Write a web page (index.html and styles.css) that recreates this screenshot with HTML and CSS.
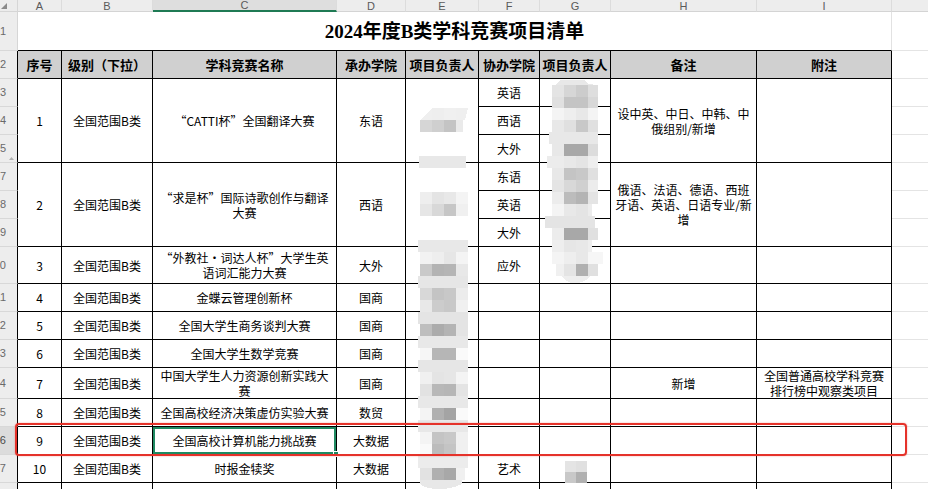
FILE: index.html
```html
<!DOCTYPE html>
<html lang="zh-CN">
<head>
<meta charset="utf-8">
<title>2024年度B类学科竞赛项目清单</title>
<link rel="stylesheet" href="styles.css">
</head>
<body>
<div class="wrap">
  <div class="sheet">
    <div class="corner"><svg width="6" height="6" viewBox="0 0 6 6"><polygon points="6,0 6,6 0,6" fill="#8a8a8a"/></svg></div>
    <div class="ch">A</div><div class="ch">B</div><div class="ch sel">C</div><div class="ch">D</div><div class="ch">E</div><div class="ch">F</div><div class="ch">G</div><div class="ch">H</div><div class="ch">I</div><div class="ch last"></div>

    <div class="rn top">1</div><div class="title">2024年度B类学科竞赛项目清单</div><div class="x"></div>

    <div class="rn">2</div><div class="th">序号</div><div class="th">级别（下拉）</div><div class="th">学科竞赛名称</div><div class="th">承办学院</div><div class="th">项目负责人</div><div class="th">协办学院</div><div class="th">项目负责人</div><div class="th">备注</div><div class="th">附注</div><div class="x"></div>

    <div class="rn">3</div><div class="c s3">1</div><div class="c s3">全国范围B类</div><div class="c s3">“CATTI杯”全国翻译大赛</div><div class="c s3">东语</div><div class="c s3"></div><div class="c">英语</div><div class="c"></div><div class="c s3">设中英、中日、中韩、中<br>俄组别/新增</div><div class="c s3"></div><div class="x"></div>
    <div class="rn">4</div><div class="c">西语</div><div class="c"></div><div class="x"></div>
    <div class="rn hid">5<svg class="hidemark" width="5" height="9" viewBox="0 0 5 9"><polygon points="2.5,0 5,3 0,3" fill="#b0b0b0"/><polygon points="0,6 5,6 2.5,9" fill="#b0b0b0"/></svg></div><div class="c">大外</div><div class="c"></div><div class="x"></div>

    <div class="rn">7</div><div class="c s3">2</div><div class="c s3">全国范围B类</div><div class="c s3">“求是杯”国际诗歌创作与翻译<br>大赛</div><div class="c s3">西语</div><div class="c s3"></div><div class="c">东语</div><div class="c"></div><div class="c s3">俄语、法语、德语、西班<br>牙语、英语、日语专业/新<br>增</div><div class="c s3"></div><div class="x"></div>
    <div class="rn">8</div><div class="c">英语</div><div class="c"></div><div class="x"></div>
    <div class="rn">9</div><div class="c">大外</div><div class="c"></div><div class="x"></div>

    <div class="rn">10</div><div class="c">3</div><div class="c">全国范围B类</div><div class="c">“外教社·词达人杯”大学生英<br>语词汇能力大赛</div><div class="c">大外</div><div class="c"></div><div class="c">应外</div><div class="c"></div><div class="c"></div><div class="c"></div><div class="x"></div>

    <div class="rn">11</div><div class="c">4</div><div class="c">全国范围B类</div><div class="c">金蝶云管理创新杯</div><div class="c">国商</div><div class="c"></div><div class="c"></div><div class="c"></div><div class="c"></div><div class="c"></div><div class="x"></div>

    <div class="rn">12</div><div class="c">5</div><div class="c">全国范围B类</div><div class="c">全国大学生商务谈判大赛</div><div class="c">国商</div><div class="c"></div><div class="c"></div><div class="c"></div><div class="c"></div><div class="c"></div><div class="x"></div>

    <div class="rn">13</div><div class="c">6</div><div class="c">全国范围B类</div><div class="c">全国大学生数学竞赛</div><div class="c">国商</div><div class="c"></div><div class="c"></div><div class="c"></div><div class="c"></div><div class="c"></div><div class="x"></div>

    <div class="rn">14</div><div class="c">7</div><div class="c">全国范围B类</div><div class="c">中国大学生人力资源创新实践大<br>赛</div><div class="c">国商</div><div class="c"></div><div class="c"></div><div class="c"></div><div class="c">新增</div><div class="c">全国普通高校学科竞赛<br>排行榜中观察类项目</div><div class="x"></div>

    <div class="rn">15</div><div class="c">8</div><div class="c">全国范围B类</div><div class="c">全国高校经济决策虚仿实验大赛</div><div class="c">数贸</div><div class="c"></div><div class="c"></div><div class="c"></div><div class="c"></div><div class="c"></div><div class="x"></div>

    <div class="rn cur">16</div><div class="c">9</div><div class="c">全国范围B类</div><div class="c active">全国高校计算机能力挑战赛<span class="handle"></span></div><div class="c">大数据</div><div class="c"></div><div class="c"></div><div class="c"></div><div class="c"></div><div class="c"></div><div class="x"></div>

    <div class="rn">17</div><div class="c">10</div><div class="c">全国范围B类</div><div class="c">时报金犊奖</div><div class="c">大数据</div><div class="c"></div><div class="c">艺术</div><div class="c"></div><div class="c"></div><div class="c"></div><div class="x"></div>

    <div class="rn">18</div><div class="c"></div><div class="c"></div><div class="c"></div><div class="c"></div><div class="c"></div><div class="c"></div><div class="c"></div><div class="c"></div><div class="c"></div><div class="x"></div>
  </div>

  <svg class="mosaic" width="928" height="489" viewBox="0 0 928 489" shape-rendering="crispEdges">
    <!-- E column -->
    <polygon points="420,120 432,108 468,108 465,120" fill="#efefef"/>
    <rect x="432" y="108" width="12" height="12" fill="#eeeeee"/><rect x="444" y="108" width="12" height="12" fill="#f0f0f0"/>
    <rect x="420" y="120" width="12" height="12" fill="#d6d6d6"/><rect x="432" y="120" width="12" height="12" fill="#cfcfcf"/><rect x="444" y="120" width="12" height="12" fill="#c4c4c4"/><rect x="456" y="120" width="7" height="12" fill="#eaeaea"/>
    <rect x="419" y="156" width="47" height="12" fill="#e8e8e8"/>
    <rect x="420" y="192" width="12" height="12" fill="#eeeeee"/><rect x="432" y="192" width="12" height="12" fill="#e4e4e4"/><rect x="444" y="192" width="12" height="12" fill="#e8e8e8"/><rect x="456" y="192" width="12" height="12" fill="#f4f4f4"/>
    <rect x="420" y="204" width="12" height="12" fill="#e6e6e6"/><rect x="432" y="204" width="12" height="12" fill="#d8d8d8"/><rect x="444" y="204" width="12" height="12" fill="#c6c6c6"/><rect x="456" y="204" width="12" height="12" fill="#f0f0f0"/>
    <rect x="418" y="240" width="50" height="12" fill="#e8e8e8"/>
    <rect x="420" y="252" width="12" height="12" fill="#f2f2f2"/><rect x="432" y="252" width="12" height="12" fill="#eeeeee"/><rect x="444" y="252" width="12" height="12" fill="#e6e6e6"/><rect x="456" y="252" width="12" height="12" fill="#f4f4f4"/>
    <rect x="420" y="264" width="12" height="12" fill="#c9c9c9"/><rect x="432" y="264" width="12" height="12" fill="#b3b3b3"/><rect x="444" y="264" width="12" height="12" fill="#b5b5b5"/><rect x="456" y="264" width="12" height="12" fill="#e8e8e8"/>
    <rect x="418" y="276" width="50" height="12" fill="#e6e6e6"/>
    <rect x="420" y="288" width="12" height="12" fill="#d8d8d8"/><rect x="432" y="288" width="12" height="12" fill="#c4c4c4"/><rect x="444" y="288" width="12" height="12" fill="#c8c8c8"/><rect x="456" y="288" width="12" height="12" fill="#ececec"/>
    <rect x="420" y="300" width="12" height="12" fill="#e8e8e8"/><rect x="432" y="300" width="12" height="12" fill="#cccccc"/><rect x="444" y="300" width="12" height="12" fill="#c8c8c8"/><rect x="456" y="300" width="12" height="12" fill="#f0f0f0"/>
    <rect x="418" y="312" width="50" height="12" fill="#e4e4e4"/>
    <rect x="420" y="324" width="12" height="12" fill="#bebebe"/><rect x="432" y="324" width="12" height="12" fill="#acacac"/><rect x="444" y="324" width="12" height="12" fill="#b4b4b4"/><rect x="456" y="324" width="12" height="12" fill="#e4e4e4"/>
    <rect x="418" y="336" width="50" height="12" fill="#e8e8e8"/>
    <rect x="420" y="348" width="12" height="12" fill="#f6f6f6"/><rect x="432" y="348" width="12" height="12" fill="#b6b6b6"/><rect x="444" y="348" width="12" height="12" fill="#b6b6b6"/><rect x="456" y="348" width="12" height="12" fill="#fafafa"/>
    <rect x="418" y="360" width="50" height="12" fill="#e6e6e6"/>
    <rect x="420" y="372" width="12" height="12" fill="#f0f0f0"/><rect x="432" y="372" width="12" height="12" fill="#e4e4e4"/><rect x="444" y="372" width="12" height="12" fill="#e6e6e6"/><rect x="456" y="372" width="12" height="12" fill="#f4f4f4"/>
    <rect x="420" y="384" width="12" height="12" fill="#e2e2e2"/><rect x="432" y="384" width="12" height="12" fill="#b8b8b8"/><rect x="444" y="384" width="12" height="12" fill="#b6b6b6"/><rect x="456" y="384" width="12" height="12" fill="#e4e4e4"/>
    <rect x="418" y="396" width="50" height="12" fill="#e8e8e8"/>
    <rect x="420" y="408" width="12" height="12" fill="#f4f4f4"/><rect x="432" y="408" width="12" height="12" fill="#b0b0b0"/><rect x="444" y="408" width="12" height="12" fill="#a4a4a4"/><rect x="456" y="408" width="12" height="12" fill="#fafafa"/>
    <rect x="418" y="420" width="50" height="12" fill="#e8e8e8"/>
    <rect x="420" y="432" width="12" height="12" fill="#f4f4f4"/><rect x="432" y="432" width="12" height="12" fill="#c4c4c4"/><rect x="444" y="432" width="12" height="12" fill="#c8c8c8"/><rect x="456" y="432" width="12" height="12" fill="#f0f0f0"/>
    <rect x="420" y="444" width="12" height="12" fill="#fafafa"/><rect x="432" y="444" width="12" height="12" fill="#bcbcbc"/><rect x="444" y="444" width="12" height="12" fill="#c4c4c4"/><rect x="456" y="444" width="12" height="12" fill="#f0f0f0"/>
    <rect x="418" y="456" width="50" height="12" fill="#ececec"/>
    <rect x="420" y="468" width="12" height="12" fill="#e2e2e2"/><rect x="432" y="468" width="12" height="12" fill="#b0b0b0"/><rect x="444" y="468" width="12" height="12" fill="#a8a8a8"/><rect x="456" y="468" width="9" height="12" fill="#f0f0f0"/>
    <path d="M420 480 H462 V484 Q452 489 440 489 Q426 489 420 484 Z" fill="#e8e8e8"/>

    <!-- G column -->
    <path d="M556 85 L560 80 L584 80 L588 84 L598 85 Z" fill="#e8e8e8"/>
    <rect x="552" y="85" width="12" height="12" fill="#e4e4e4"/><rect x="564" y="85" width="12" height="12" fill="#d6d6d6"/><rect x="576" y="85" width="12" height="12" fill="#cccccc"/><rect x="588" y="85" width="10" height="12" fill="#dedede"/>
    <rect x="552" y="97" width="12" height="11" fill="#e0e0e0"/><rect x="564" y="97" width="12" height="11" fill="#c4c4c4"/><rect x="576" y="97" width="12" height="11" fill="#c4c4c4"/><rect x="588" y="97" width="10" height="11" fill="#d8d8d8"/>
    <rect x="552" y="108" width="12" height="12" fill="#f4f4f4"/><rect x="564" y="108" width="12" height="12" fill="#eeeeee"/><rect x="576" y="108" width="12" height="12" fill="#e8e8e8"/><rect x="588" y="108" width="10" height="12" fill="#f4f4f4"/>
    <rect x="552" y="120" width="12" height="12" fill="#e8e8e8"/><rect x="564" y="120" width="12" height="12" fill="#e0e0e0"/><rect x="576" y="120" width="12" height="12" fill="#c8c8c8"/><rect x="588" y="120" width="10" height="12" fill="#e0e0e0"/>
    <rect x="549" y="132" width="49" height="12" fill="#e8e8e8"/>
    <rect x="552" y="144" width="12" height="12" fill="#e8e8e8"/><rect x="564" y="144" width="12" height="12" fill="#a8a8a8"/><rect x="576" y="144" width="12" height="12" fill="#a8a8a8"/><rect x="588" y="144" width="10" height="12" fill="#dcdcdc"/>
    <rect x="547" y="156" width="17" height="12" fill="#ececec"/><rect x="564" y="156" width="12" height="12" fill="#e8e8e8"/><rect x="576" y="156" width="12" height="12" fill="#e4e4e4"/><rect x="588" y="156" width="10" height="12" fill="#eeeeee"/>
    <rect x="552" y="168" width="12" height="12" fill="#e8e8e8"/><rect x="564" y="168" width="12" height="12" fill="#c4c4c4"/><rect x="576" y="168" width="12" height="12" fill="#c8c8c8"/><rect x="588" y="168" width="10" height="12" fill="#e0e0e0"/>
    <rect x="552" y="180" width="12" height="12" fill="#e4e4e4"/><rect x="564" y="180" width="12" height="12" fill="#d8d8d8"/><rect x="576" y="180" width="12" height="12" fill="#d0d0d0"/><rect x="588" y="180" width="10" height="12" fill="#ececec"/>
    <rect x="552" y="192" width="12" height="12" fill="#ececec"/><rect x="564" y="192" width="12" height="12" fill="#bcbcbc"/><rect x="576" y="192" width="12" height="12" fill="#b4b4b4"/><rect x="588" y="192" width="10" height="12" fill="#e4e4e4"/>
    <rect x="552" y="204" width="12" height="12" fill="#f4f4f4"/><rect x="564" y="204" width="12" height="12" fill="#e8e8e8"/><rect x="576" y="204" width="12" height="12" fill="#e4e4e4"/><rect x="588" y="204" width="4" height="12" fill="#ececec"/>
    <rect x="545" y="216" width="50" height="12" fill="#e4e4e4"/>
    <rect x="552" y="228" width="12" height="12" fill="#ececec"/><rect x="564" y="228" width="12" height="12" fill="#a8a8a8"/><rect x="576" y="228" width="12" height="12" fill="#a8a8a8"/><rect x="588" y="228" width="10" height="12" fill="#e0e0e0"/>
    <rect x="552" y="240" width="12" height="12" fill="#eeeeee"/><rect x="564" y="240" width="12" height="12" fill="#e6e6e6"/><rect x="576" y="240" width="12" height="12" fill="#e8e8e8"/><rect x="588" y="240" width="4" height="12" fill="#eeeeee"/>
    <rect x="552" y="252" width="12" height="12" fill="#f4f4f4"/><rect x="564" y="252" width="12" height="12" fill="#eeeeee"/><rect x="576" y="252" width="12" height="12" fill="#e8e8e8"/><rect x="588" y="252" width="15" height="12" fill="#f6f6f6"/>
    <rect x="556" y="264" width="8" height="12" fill="#f0f0f0"/><rect x="564" y="264" width="12" height="12" fill="#e4e4e4"/><rect x="576" y="264" width="12" height="12" fill="#b0b0b0"/><rect x="588" y="264" width="10" height="12" fill="#e0e0e0"/>
    <path d="M562 276 H590 Q586 283 574 283 Q566 283 562 276 Z" fill="#eeeeee"/>

    <rect x="565" y="461" width="11" height="11" fill="#e4e4e4"/><rect x="576" y="461" width="11" height="11" fill="#e0e0e0"/>
    <rect x="565" y="472" width="11" height="11" fill="#c8c8c8"/><rect x="576" y="472" width="11" height="11" fill="#b0b0b0"/>
  </svg>

  <div class="redbox"></div>
</div>
</body>
</html>
```

FILE: styles.css
```css
html, body {
  margin: 0;
  padding: 0;
  background: #ffffff;
}
body {
  width: 928px;
  height: 489px;
  overflow: hidden;
  font-family: "Noto Sans CJK SC", sans-serif;
}
.wrap {
  position: relative;
  width: 928px;
  height: 489px;
  overflow: hidden;
}
.sheet {
  display: grid;
  grid-template-columns: 18px 44px 91px 184px 69px 73px 61px 71px 146px 135px 36px;
  grid-template-rows: 12px 39px 28px 28px 28px 28px 28px 28px 28px 37px 28px 28px 28px 31px 28px 28px 28px 28px;
}
.sheet > div {
  box-sizing: border-box;
  border-right: 1px solid #000;
  border-bottom: 1px solid #000;
  display: flex;
  align-items: center;
  justify-content: center;
  text-align: center;
  font-size: 12px;
  line-height: 15px;
  color: #000;
  overflow: hidden;
  min-width: 0;
}
.sheet > .corner {
  background: #ececec;
  border-right-color: #d6d6d6;
  border-bottom-color: #d6d6d6;
  justify-content: flex-start;
  align-items: flex-start;
  padding: 3px 0 0 1px;
}
.sheet > .ch {
  background: #ededed;
  color: #5a5a5a;
  font-family: "Liberation Sans", sans-serif;
  font-size: 11px;
  line-height: 12px;
  border-right-color: #dcdcdc;
  border-bottom-color: #d4d4d4;
}
.sheet > .ch.sel {
  background: #dedede;
  border-bottom: 2px solid #1f7a54;
}
.sheet > .ch.last {
  border-right: none;
}
.sheet > .rn {
  position: relative;
  background: #ededed;
  color: #6a6a6a;
  font-family: "Liberation Sans", sans-serif;
  font-size: 11px;
  justify-content: flex-end;
  padding-right: 11px;
  border-bottom-color: #d8d8d8;
  border-right-color: #000;
  overflow: hidden;
}
.sheet > .rn.top {
  border-right-color: #d6d6d6;
}
.sheet > .rn.cur {
  background: #dcdcdc;
  color: #4a4a4a;
}
.hidemark {
  position: absolute;
  right: 3px;
  bottom: -4px;
}
.sheet > .rn.hid {
  overflow: visible;
}
.sheet > .title {
  grid-column: span 9;
  font-family: "Liberation Serif", "Noto Sans CJK SC", serif;
  font-weight: bold;
  font-size: 19px;
  line-height: 24px;
  border-right-color: #e2e2e2;
  padding-top: 2px;
}
.sheet > .x {
  border-right: none;
  border-bottom-color: #e4e4e4;
}
.sheet > .th {
  background: #d0d0d0;
  font-weight: bold;
  font-size: 13px;
}
.sheet > .s3 {
  grid-row: span 3;
}
.sheet > .active {
  position: relative;
  overflow: visible;
  box-shadow: inset 0 0 0 2px #1f8a62;
}
.handle {
  position: absolute;
  right: -3px;
  bottom: -3px;
  width: 4px;
  height: 4px;
  background: #1f8a62;
  border: 1px solid #fff;
}
.mosaic {
  position: absolute;
  left: 0;
  top: 0;
}
.redbox {
  position: absolute;
  left: 15px;
  top: 423px;
  width: 892px;
  height: 33px;
  box-sizing: border-box;
  border: 2.5px solid #e5322a;
  border-radius: 4px;
  box-shadow: 0 0 1.5px rgba(229, 50, 42, 0.6);
}
```
